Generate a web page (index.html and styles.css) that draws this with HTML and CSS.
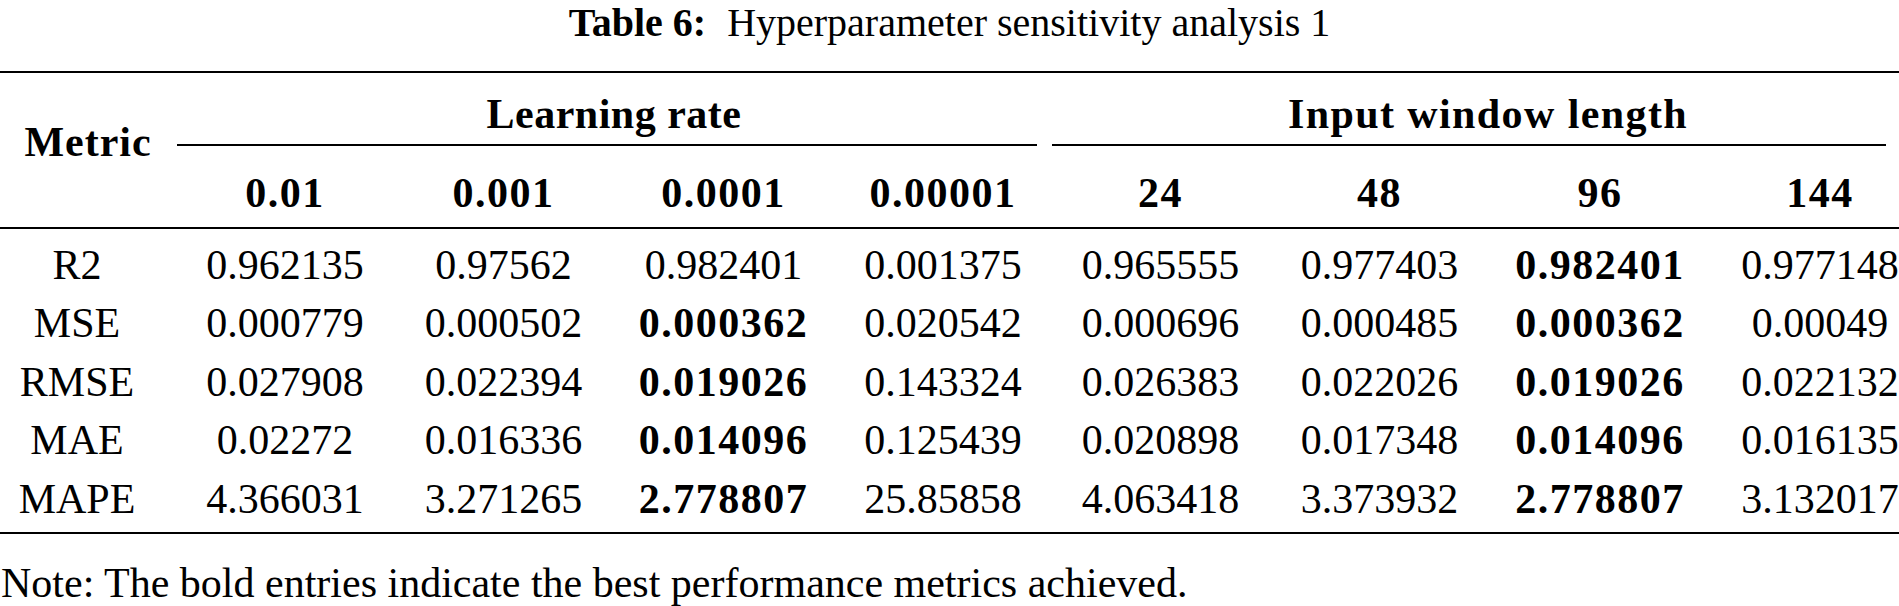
FILE: index.html
```html
<!DOCTYPE html>
<html lang="en">
<head>
<meta charset="utf-8">
<title>Table 6: Hyperparameter sensitivity analysis 1</title>
<link rel="stylesheet" href="styles.css">
</head>
<body>
<div class="figure">
  <div class="caption"><span class="caption-label">Table 6:</span>Hyperparameter sensitivity analysis 1</div>
  <div class="table-frame">
    <table class="data">
      <colgroup>
        <col class="w-metric"><col class="w-a"><col class="w-b"><col class="w-c"><col class="w-d"><col class="w-e"><col class="w-f"><col class="w-g"><col class="w-last">
      </colgroup>
      <thead>
        <tr>
          <th class="metric-head" rowspan="2">Metric</th>
          <th class="group" colspan="4"><div class="group-label lr">Learning rate</div></th>
          <th class="group" colspan="4"><div class="group-label iw">Input window length</div></th>
        </tr>
        <tr class="sub">
          <th>0.01</th>
          <th>0.001</th>
          <th>0.0001</th>
          <th>0.00001</th>
          <th>24</th>
          <th>48</th>
          <th>96</th>
          <th class="last">144</th>
        </tr>
      </thead>
      <tbody>
        <tr>
          <td class="metric">R2</td>
          <td>0.962135</td><td>0.97562</td><td>0.982401</td><td>0.001375</td>
          <td>0.965555</td><td>0.977403</td><td class="best">0.982401</td><td class="last">0.977148</td>
        </tr>
        <tr>
          <td class="metric">MSE</td>
          <td>0.000779</td><td>0.000502</td><td class="best">0.000362</td><td>0.020542</td>
          <td>0.000696</td><td>0.000485</td><td class="best">0.000362</td><td class="last">0.00049</td>
        </tr>
        <tr>
          <td class="metric">RMSE</td>
          <td>0.027908</td><td>0.022394</td><td class="best">0.019026</td><td>0.143324</td>
          <td>0.026383</td><td>0.022026</td><td class="best">0.019026</td><td class="last">0.022132</td>
        </tr>
        <tr>
          <td class="metric">MAE</td>
          <td>0.02272</td><td>0.016336</td><td class="best">0.014096</td><td>0.125439</td>
          <td>0.020898</td><td>0.017348</td><td class="best">0.014096</td><td class="last">0.016135</td>
        </tr>
        <tr>
          <td class="metric">MAPE</td>
          <td>4.366031</td><td>3.271265</td><td class="best">2.778807</td><td>25.85858</td>
          <td>4.063418</td><td>3.373932</td><td class="best">2.778807</td><td class="last">3.132017</td>
        </tr>
      </tbody>
    </table>
  </div>
  <p class="note">Note: The bold entries indicate the best performance metrics achieved.</p>
</div>
</body>
</html>
```

FILE: styles.css
```css
html, body {
  margin: 0;
  padding: 0;
  background: #fff;
}

body {
  width: 1899px;
  overflow: hidden;
  font-family: "Liberation Serif", "Times New Roman", serif;
  font-size: 42px;
  color: #000;
}

.caption {
  text-align: center;
  font-size: 40px;
  line-height: 35px;
  padding-top: 5px;
  margin: 0 0 31px;
}

.caption-label {
  font-weight: bold;
  margin-right: 21px;
}

.table-frame {
  border-top: 2px solid #000;
  border-bottom: 2px solid #000;
}

table.data {
  width: 1899px;
  table-layout: fixed;
  border-collapse: separate;
  border-spacing: 0;
}

.w-metric { width: 176px; }
.w-a { width: 218px; }
.w-b { width: 219px; }
.w-c { width: 221px; }
.w-d { width: 218px; }
.w-e { width: 217px; }
.w-f { width: 221px; }
.w-g { width: 220px; }
.w-last { width: 189px; }

th, td {
  padding: 0;
  text-align: center;
  font-weight: normal;
  white-space: nowrap;
}

thead th {
  font-weight: bold;
  line-height: 46px;
}

.metric-head {
  vertical-align: top;
  padding-top: 46px;
  border-bottom: 2px solid #000;
  letter-spacing: 1px;
}

.group {
  vertical-align: top;
  padding-top: 18px;
}

.group-label {
  padding-bottom: 7px;
  border-bottom: 2px solid #000;
}

.group-label.lr {
  margin: 0 15px 0 1px;
  padding-left: 14px;
  letter-spacing: 0.5px;
}

.group-label.iw {
  margin: 0 13px 0 0;
  padding-left: 38px;
  letter-spacing: 1.4px;
}

.sub th {
  padding: 24px 0 11px;
  border-bottom: 2px solid #000;
  letter-spacing: 1.5px;
}

.sub th.last {
  padding-left: 31px;
}

tbody td {
  line-height: 58.5px;
}

tbody tr:first-child td {
  padding-top: 6.5px;
}

tbody tr:last-child td {
  padding-bottom: 4px;
}

tbody td.metric {
  padding-right: 22px;
}

tbody td.last {
  padding-left: 31px;
}

td.best {
  font-weight: bold;
  letter-spacing: 1.5px;
}

.note {
  margin: 26px 0 0;
  padding-left: 1px;
  line-height: 46px;
}
```
